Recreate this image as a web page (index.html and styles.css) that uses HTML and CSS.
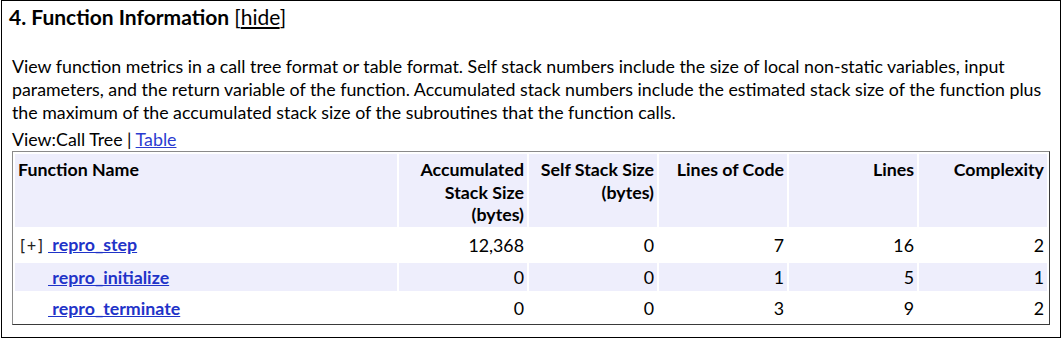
FILE: index.html
```html
<!DOCTYPE html>
<html>
<head>
<meta charset="utf-8">
<link rel="stylesheet" href="styles.css">
</head>
<body>
<div class="section">
  <h2 class="title">4. Function Information <span class="hide">[<a class="hide-link" href="#">hide</a>]</span></h2>
  <div class="content">
    <p class="desc">View function metrics in a call tree format or table format. Self stack numbers include the size of local non-static variables, input parameters, and the return variable of the function. Accumulated stack numbers include the estimated stack size of the function plus the maximum of the accumulated stack size of the subroutines that the function calls.</p>
    <div class="view">View:Call Tree | <a class="link" href="#">Table</a></div>
    <table class="metrics">
      <thead>
        <tr>
          <th class="name-col">Function Name</th>
          <th class="num-col">Accumulated Stack Size (bytes)</th>
          <th class="num-col">Self Stack Size (bytes)</th>
          <th class="num-col">Lines of Code</th>
          <th class="num-col">Lines</th>
          <th class="num-col">Complexity</th>
        </tr>
      </thead>
      <tbody>
        <tr class="row row-a">
          <td><span class="tog">[+]</span><a class="fn" href="#">&nbsp;repro_step</a></td>
          <td class="num">12,368</td>
          <td class="num">0</td>
          <td class="num">7</td>
          <td class="num">16</td>
          <td class="num">2</td>
        </tr>
        <tr class="row row-b">
          <td><span class="tog"></span><a class="fn" href="#">&nbsp;repro_initialize</a></td>
          <td class="num">0</td>
          <td class="num">0</td>
          <td class="num">1</td>
          <td class="num">5</td>
          <td class="num">1</td>
        </tr>
        <tr class="row row-c">
          <td><span class="tog"></span><a class="fn" href="#">&nbsp;repro_terminate</a></td>
          <td class="num">0</td>
          <td class="num">0</td>
          <td class="num">3</td>
          <td class="num">9</td>
          <td class="num">2</td>
        </tr>
      </tbody>
    </table>
  </div>
</div>
</body>
</html>
```
FILE: styles.css
```css
html, body {
  margin: 0;
  padding: 0;
  background: #fff;
}
body {
  font-family: Lato, "Open Sans", "DejaVu Sans", sans-serif;
  font-size: 17.8px;
  color: #000;
}
.section {
  margin-left: 1px;
  width: 1060px;
  height: 338px;
  box-sizing: border-box;
  border: 1px solid #000;
}
.title {
  margin: 0;
  padding: 4px 7px 0;
  font-size: 21px;
  font-weight: 700;
  line-height: 24px;
}
.hide {
  font-weight: 400;
}
.hide-link {
  color: #000;
  text-decoration: underline;
}
.content {
  padding: 0 10px;
}
.desc {
  margin: 26px 0 0;
  line-height: 23px;
}
.view {
  margin-top: 4px;
  line-height: 23px;
}
.link {
  color: #2a3bd0;
  text-decoration: underline;
}
.metrics {
  width: 100%;
  border-collapse: separate;
  border-spacing: 2px;
  border: 1px solid;
  border-color: #8a8a8a #3a3a3a #3a3a3a #8a8a8a;
}
.metrics th {
  background: #eeeefc;
  font-weight: 700;
  vertical-align: top;
  padding: 4px 3px 1px;
  line-height: 22.5px;
}
.name-col {
  text-align: left;
}
.num-col {
  width: 122px;
  text-align: right;
}
.metrics td {
  padding: 3px 3px;
  line-height: 22px;
  vertical-align: middle;
}
.row-b td {
  background: #eeeefc;
}
.row-a td {
  padding: 4px 3px 4px;
}
.row-c td {
  padding: 4px 3px 3px;
}
.num {
  text-align: right;
}
.tog {
  display: inline-block;
  width: 30px;
  font-family: "DejaVu Sans Mono", "Liberation Mono", monospace;
  font-size: 15px;
  color: #222;
}
.fn {
  color: #1f33c8;
  font-weight: 700;
  text-decoration: underline;
}
```
